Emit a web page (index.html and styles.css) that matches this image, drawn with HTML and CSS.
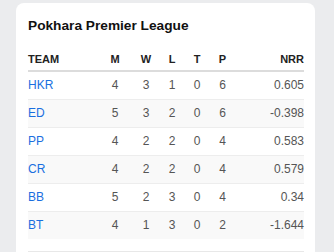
FILE: index.html
```html
<!DOCTYPE html>
<html>
<head>
<meta charset="utf-8">
<link rel="stylesheet" href="styles.css">
</head>
<body>
<div class="card">
  <h2 class="title">Pokhara Premier League</h2>
  <table class="standings">
    <colgroup>
      <col class="c-team"><col class="c-m"><col class="c-w"><col class="c-l"><col class="c-t"><col class="c-p"><col class="c-nrr">
    </colgroup>
    <thead>
      <tr><th class="left">TEAM</th><th>M</th><th>W</th><th>L</th><th>T</th><th>P</th><th class="right">NRR</th></tr>
    </thead>
    <tbody>
      <tr><td class="team">HKR</td><td>4</td><td>3</td><td>1</td><td>0</td><td>6</td><td class="right">0.605</td></tr>
      <tr><td class="team">ED</td><td>5</td><td>3</td><td>2</td><td>0</td><td>6</td><td class="right">-0.398</td></tr>
      <tr><td class="team">PP</td><td>4</td><td>2</td><td>2</td><td>0</td><td>4</td><td class="right">0.583</td></tr>
      <tr><td class="team">CR</td><td>4</td><td>2</td><td>2</td><td>0</td><td>4</td><td class="right">0.579</td></tr>
      <tr><td class="team">BB</td><td>5</td><td>2</td><td>3</td><td>0</td><td>4</td><td class="right">0.34</td></tr>
      <tr><td class="team">BT</td><td>4</td><td>1</td><td>3</td><td>0</td><td>2</td><td class="right">-1.644</td></tr>
    </tbody>
  </table>
  <div class="footer"></div>
</div>
</body>
</html>
```

FILE: styles.css
```css
html, body {
  margin: 0;
  background: #ebecee;
}
body {
  padding: 3px 19px 0 16px;
  font-family: "Liberation Sans", Arial, sans-serif;
}
.card {
  background: #ffffff;
  border-radius: 8px 8px 0 0;
  padding: 14px 11px 20px 12px;
  height: 260px;
  box-sizing: border-box;
}
.title {
  margin: 0 0 14px 0;
  font-size: 13.7px;
  line-height: 17px;
  font-weight: bold;
  color: #111111;
}
.standings {
  width: 276px;
  border-collapse: collapse;
  table-layout: fixed;
}
.c-team { width: 72px; }
.c-m { width: 30px; }
.c-w { width: 32px; }
.c-l { width: 20px; }
.c-t { width: 30px; }
.c-p { width: 21px; }
.c-nrr { width: 71px; }
.standings th {
  font-size: 11px;
  line-height: 13px;
  font-weight: bold;
  color: #222222;
  padding: 5px 0 4px 0;
  text-align: center;
  border-bottom: 2px solid #dcdcdc;
}
.standings td {
  font-size: 12px;
  line-height: 13px;
  color: #555555;
  padding: 7px 0;
  text-align: center;
  border-top: 1px solid #ededed;
}
.standings tbody tr:first-child td {
  border-top: none;
}
.standings tbody tr:nth-child(even) td {
  background: #f9f9f9;
}
.standings .left { text-align: left; }
.standings .right { text-align: right; }
.standings td.team {
  text-align: left;
  color: #1a6fe0;
}
.footer {
  margin-top: 12px;
  border-top: 1px solid #e8e8e8;
}
```
